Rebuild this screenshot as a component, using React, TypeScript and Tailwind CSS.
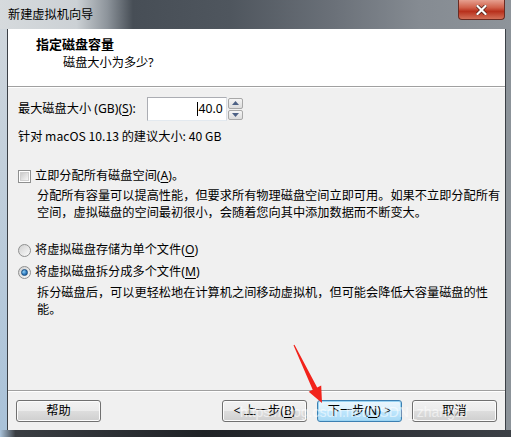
import React from 'react';

const ui = "font-['Noto_Sans','Noto_Sans_CJK_SC',sans-serif]";

// Win7 style push button
const Btn: React.FC<{ children: React.ReactNode; primary?: boolean }> = ({ children, primary }) => (
  <button
    type="button"
    className={`h-[22px] w-[85px] rounded-[3px] border text-[12.2px] leading-[16px] text-black ${
      primary
        ? 'border-[#3c7fb1] bg-[linear-gradient(180deg,#eaf6fd_0%,#d9f0fc_50%,#bee6fd_51%,#a7d9f5_100%)] shadow-[inset_0_0_0_1px_#9ad4f3]'
        : 'border-[#707070] bg-[linear-gradient(180deg,#f2f2f2_0%,#ebebeb_50%,#dddddd_51%,#cfcfcf_100%)] shadow-[inset_0_0_0_1px_#fcfcfc]'
    }`}
  >
    {children}
  </button>
);

const Check: React.FC = () => (
  <span className="flex h-[13px] w-[13px] items-center justify-center border border-[#8e8f8f] bg-white">
    <span className="h-[9px] w-[9px] border border-[#d0d0d0] bg-[linear-gradient(135deg,#cbcbcb,#f6f6f6)]" />
  </span>
);

const Radio: React.FC<{ checked?: boolean }> = ({ checked }) => (
  <span className="flex h-[13px] w-[13px] items-center justify-center rounded-full border border-[#8e8f8f] bg-[linear-gradient(135deg,#d0d0d0,#fbfbfb)]">
    {checked && (
      <span className="h-[7px] w-[7px] rounded-full border border-[#1a4f80] bg-[radial-gradient(circle_at_35%_35%,#8fd0f5,#2a75bc_60%,#144c82)]" />
    )}
  </span>
);

const U: React.FC<{ children: React.ReactNode }> = ({ children }) => <span className="underline underline-offset-2">{children}</span>;

export default function App() {
  return (
    <div className={`relative flex h-[437px] w-[511px] flex-col overflow-hidden bg-[#8c9399] ${ui}`}>
      {/* title bar */}
      <div className="relative flex h-[29px] shrink-0 items-center bg-[linear-gradient(90deg,#d6dadd_0%,#ccd1d5_15%,#8d949b_21%,#474e56_26%,#4f565e_45%,#6a7078_65%,#858b92_82%,#8e949a_100%)] pl-[8px]">
        <span className="text-[12.2px] leading-[16px] text-black">新建虚拟机向导</span>
        <div className="absolute right-[6px] top-0 flex h-[20px] w-[47px] items-center justify-center rounded-b-[4px] border border-t-0 border-[#6a2b22] bg-[linear-gradient(180deg,#e6a090_0%,#d0604a_40%,#b8301c_60%,#d27058_100%)]">
          <svg width="11" height="10" viewBox="0 0 11 10">
            <path d="M1.5 1 L9.5 9 M9.5 1 L1.5 9" stroke="#4a1a12" strokeWidth="3.6" strokeLinecap="square" />
            <path d="M1.5 1 L9.5 9 M9.5 1 L1.5 9" stroke="#ffffff" strokeWidth="2.2" strokeLinecap="square" />
          </svg>
        </div>
      </div>

      <div className="flex min-h-0 flex-1">
        <div className="w-[7px] shrink-0 bg-[linear-gradient(180deg,#cfd6dc,#a9c2d9)]" />
        <div className="flex min-w-0 flex-1 flex-col border-x border-[#3b4046] bg-[#f0f0f0]">
          {/* header */}
          <div className="h-[58px] shrink-0 border-b border-[#a0a0a0] bg-white shadow-[0_1px_0_#ffffff]">
            <div className="pl-[28px] pt-[7px] text-[13px] font-bold leading-[16px] text-black">指定磁盘容量</div>
            <div className="pl-[55px] pt-[3px] text-[12.2px] leading-[16px] text-black">磁盘大小为多少?</div>
          </div>

          {/* body */}
          <div className="flex flex-1 flex-col pl-[10px] pt-[10px] text-[12.2px] leading-[16px] text-black">
            <div className="flex h-[24px] items-center">
              <span>
                最大磁盘大小 (GB)(<U>S</U>):
              </span>
              <div className="ml-[11px] flex h-[24px]">
                <div className="relative flex w-[80px] items-center justify-end border border-[#abadb3] border-b-[#e3e9ef] border-r-[#dbdfe6] bg-white pr-[3px]">
                  <span className="relative">
                    <span className="absolute -left-[2px] top-[1px] h-[14px] w-px bg-black" />
                    40.0
                  </span>
                </div>
                <div className="ml-px flex w-[15px] flex-col gap-px py-px">
                  <div className="flex flex-1 items-center justify-center rounded-[2px] border border-[#a8a8a8] bg-[linear-gradient(180deg,#f5f5f5,#dcdcdc)]">
                    <svg width="7" height="4" viewBox="0 0 7 4"><path d="M0 4 L3.5 0 L7 4 Z" fill="#4d6185" /></svg>
                  </div>
                  <div className="flex flex-1 items-center justify-center rounded-[2px] border border-[#a8a8a8] bg-[linear-gradient(180deg,#f5f5f5,#dcdcdc)]">
                    <svg width="7" height="4" viewBox="0 0 7 4"><path d="M0 0 L7 0 L3.5 4 Z" fill="#4d6185" /></svg>
                  </div>
                </div>
              </div>
            </div>
            <div className="mt-[7px] font-['Noto_Sans_CJK_SC',sans-serif]">针对 macOS 10.13 的建议大小: 40 GB</div>

            <label className="mt-[24px] flex items-center gap-[4px]">
              <Check />
              <span>
                立即分配所有磁盘空间(<U>A</U>)。
              </span>
            </label>
            <div className="mt-[3px] whitespace-nowrap pl-[19px] font-['Noto_Sans_CJK_SC',sans-serif] leading-[17px]">
              分配所有容量可以提高性能，但要求所有物理磁盘空间立即可用。如果不立即分配所有
              <br />
              空间，虚拟磁盘的空间最初很小，会随着您向其中添加数据而不断变大。
            </div>

            <label className="mt-[21px] flex items-center gap-[4px]">
              <Radio />
              <span>
                将虚拟磁盘存储为单个文件(<U>O</U>)
              </span>
            </label>
            <label className="mt-[6px] flex items-center gap-[4px]">
              <Radio checked />
              <span>
                将虚拟磁盘拆分成多个文件(<U>M</U>)
              </span>
            </label>
            <div className="mt-[4px] whitespace-nowrap pl-[19px] font-['Noto_Sans_CJK_SC',sans-serif] leading-[17px]">
              拆分磁盘后，可以更轻松地在计算机之间移动虚拟机，但可能会降低大容量磁盘的性
              <br />
              能。
            </div>

            <div className="flex-1" />
            <div className="-ml-[10px] border-t border-[#a0a0a0] shadow-[0_1px_0_#ffffff]" />
            <div className="-ml-[2px] flex h-[39px] items-start pr-[8px] pt-[9px]">
              <Btn>帮助</Btn>
              <div className="flex-1" />
              <Btn>
                &lt; 上一步(<U>B</U>)
              </Btn>
              <div className="w-[10px]" />
              <Btn primary>
                下一步(<U>N</U>) &gt;
              </Btn>
              <div className="w-[10px]" />
              <Btn>取消</Btn>
            </div>
          </div>
        </div>
        <div className="w-[5px] shrink-0 bg-[#8c9399]" />
      </div>

      {/* lower frame */}
      <div className="h-[7px] shrink-0 bg-[linear-gradient(90deg,#a9c2d9_0%,#3a3e43_3%,#1f2226_40%,#3c4046_100%)]" />

      {/* red annotation arrow */}
      <svg className="pointer-events-none absolute left-0 top-0" width="511" height="437" viewBox="0 0 511 437">
        <polygon
          points="294.5,344.8 317.2,387.6 321.2,385.6 322,403 308.7,391.7 312.7,389.8 293.5,345.2"
          fill="#f2231b"
        />
      </svg>

      {/* blog watermark */}
      <span className="pointer-events-none absolute left-[240px] top-[404px] font-['Liberation_Sans',sans-serif] text-[14px] leading-[16px] text-white/55">
        https://blog.csdn.net/CSDN_zhangEr
      </span>
    </div>
  );
}
